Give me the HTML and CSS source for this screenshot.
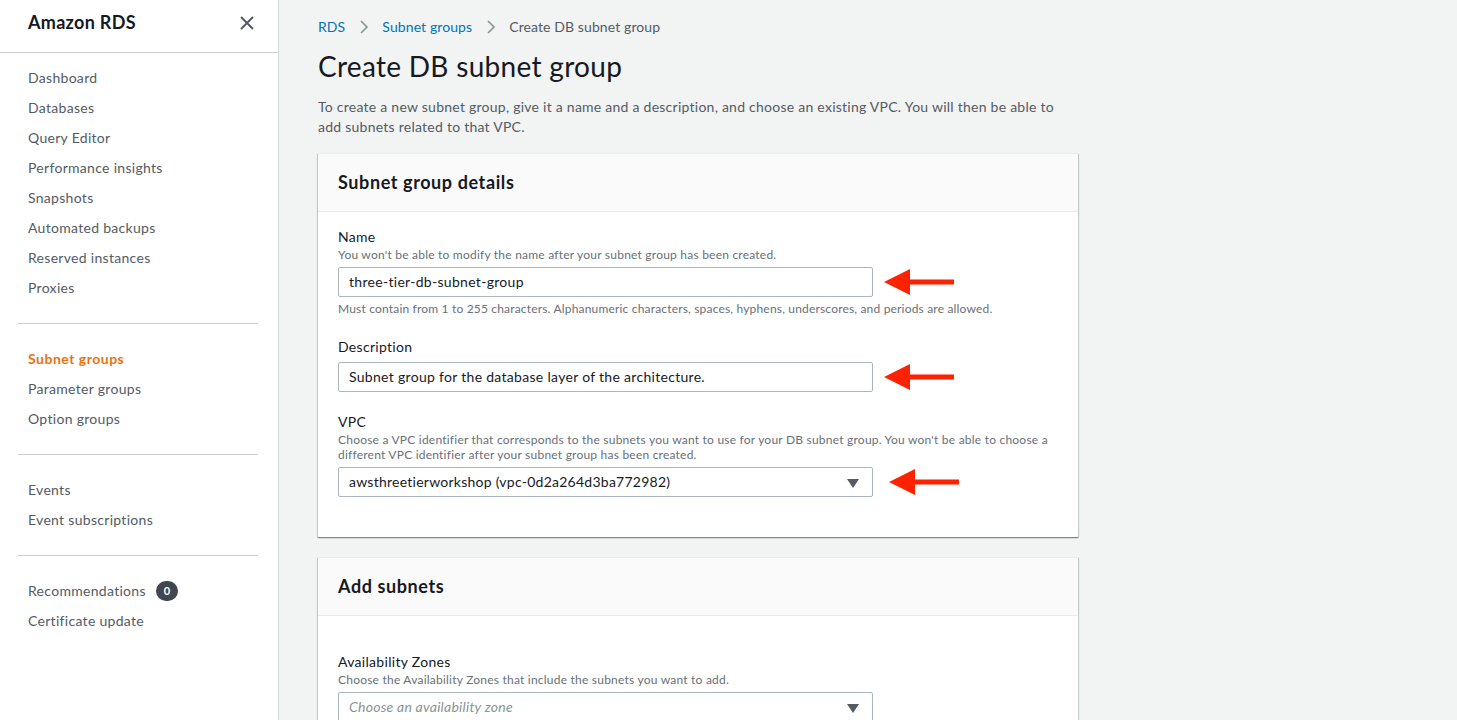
FILE: index.html
```html
<!DOCTYPE html>
<html lang="en">
<head>
<meta charset="utf-8">
<title>Create DB subnet group</title>
<link rel="stylesheet" href="styles.css">
</head>
<body>
<aside class="sidebar">
  <div class="side-head">
    <span class="side-title">Amazon RDS</span>
    <svg class="close" width="16" height="16" viewBox="0 0 16 16"><path d="M2 2 L14 14 M14 2 L2 14" stroke="#545b64" stroke-width="2" fill="none"/></svg>
  </div>
  <ul class="nav">
    <li>Dashboard</li>
    <li>Databases</li>
    <li>Query Editor</li>
    <li>Performance insights</li>
    <li>Snapshots</li>
    <li>Automated backups</li>
    <li>Reserved instances</li>
    <li>Proxies</li>
  </ul>
  <hr class="divider">
  <ul class="nav">
    <li class="active">Subnet groups</li>
    <li>Parameter groups</li>
    <li>Option groups</li>
  </ul>
  <hr class="divider">
  <ul class="nav">
    <li>Events</li>
    <li>Event subscriptions</li>
  </ul>
  <hr class="divider">
  <ul class="nav">
    <li>Recommendations <span class="badge">0</span></li>
    <li>Certificate update</li>
  </ul>
</aside>
<main class="main">
  <nav class="crumbs">
    <a class="crumb-link">RDS</a>
    <svg class="chev" width="10" height="14" viewBox="0 0 10 14"><path d="M2 1 L8 7 L2 13" stroke="#879596" stroke-width="1.6" fill="none"/></svg>
    <a class="crumb-link">Subnet groups</a>
    <svg class="chev" width="10" height="14" viewBox="0 0 10 14"><path d="M2 1 L8 7 L2 13" stroke="#879596" stroke-width="1.6" fill="none"/></svg>
    <span class="crumb-cur">Create DB subnet group</span>
  </nav>
  <h1 class="title">Create DB subnet group</h1>
  <p class="intro">To create a new subnet group, give it a name and a description, and choose an existing VPC. You will then be able to add subnets related to that VPC.</p>

  <section class="card">
    <div class="card-head"><h2>Subnet group details</h2></div>
    <div class="card-body">
      <div class="field">
        <div class="label">Name</div>
        <div class="hint">You won't be able to modify the name after your subnet group has been created.</div>
        <div class="row">
          <div class="input">three-tier-db-subnet-group</div>
          <svg class="arrow" width="72" height="28" viewBox="0 0 72 28"><path d="M0 14 L26 1 L26 11.5 L70 11.5 L70 16.5 L26 16.5 L26 27 Z" fill="#ff2200"/></svg>
        </div>
        <div class="constraint">Must contain from 1 to 255 characters. Alphanumeric characters, spaces, hyphens, underscores, and periods are allowed.</div>
      </div>
      <div class="field">
        <div class="label lbl-gap">Description</div>
        <div class="row">
          <div class="input">Subnet group for the database layer of the architecture.</div>
          <svg class="arrow" width="72" height="28" viewBox="0 0 72 28"><path d="M0 14 L26 1 L26 11.5 L70 11.5 L70 16.5 L26 16.5 L26 27 Z" fill="#ff2200"/></svg>
        </div>
      </div>
      <div class="field">
        <div class="label">VPC</div>
        <div class="hint hint-2">Choose a VPC identifier that corresponds to the subnets you want to use for your DB subnet group. You won't be able to choose a different VPC identifier after your subnet group has been created.</div>
        <div class="row">
          <div class="input select">awsthreetierworkshop (vpc-0d2a264d3ba772982)<span class="caret"></span></div>
          <svg class="arrow arrow-3" width="72" height="28" viewBox="0 0 72 28"><path d="M0 14 L26 1 L26 11.5 L70 11.5 L70 16.5 L26 16.5 L26 27 Z" fill="#ff2200"/></svg>
        </div>
      </div>
    </div>
  </section>

  <section class="card">
    <div class="card-head"><h2>Add subnets</h2></div>
    <div class="card-body body-2">
      <div class="field">
        <div class="label">Availability Zones</div>
        <div class="hint">Choose the Availability Zones that include the subnets you want to add.</div>
        <div class="row">
          <div class="input select placeholder">Choose an availability zone<span class="caret"></span></div>
        </div>
      </div>
    </div>
  </section>
</main>
</body>
</html>
```
FILE: styles.css
```css
* { box-sizing: border-box; }
html, body { margin: 0; padding: 0; }
body {
  display: flex;
  height: 720px;
  background: #f2f3f3;
  font-family: "Lato", "Open Sans", Arial, sans-serif;
  color: #16191f;
  font-size: 14px;
  line-height: 20px;
  letter-spacing: 0.3px;
  overflow: hidden;
}
.sidebar {
  width: 279px;
  flex: none;
  background: #ffffff;
  border-right: 1px solid #d5dbdb;
  height: 720px;
}
.side-head {
  height: 53px;
  border-bottom: 1px solid #cccccc;
  display: flex;
  align-items: center;
  justify-content: space-between;
  padding: 0 23px 0 28px;
}
.side-title {
  font-size: 18px;
  font-weight: 700;
  color: #16191f;
  margin-top: -8px;
}
.close { margin-top: -7px; }
.nav {
  list-style: none;
  margin: 0;
  padding: 0;
}
.nav:first-of-type { padding-top: 10px; }
.nav li {
  padding: 5px 28px;
  color: #545b64;
  font-size: 14px;
  line-height: 20px;
  display: flex;
  align-items: center;
}
.nav li.active { color: #ec7211; font-weight: 700; letter-spacing: 0.5px; }
.divider {
  border: 0;
  border-top: 1px solid #cccccc;
  margin: 20px 20px 20px 18px;
}
.badge {
  display: inline-flex;
  align-items: center;
  justify-content: center;
  width: 22px;
  height: 20px;
  border-radius: 10px;
  background: #414750;
  color: #fff;
  font-size: 11px;
  font-weight: 700;
  letter-spacing: 0;
  margin-left: 10px;
}
.main {
  flex: 1;
  padding: 17px 40px 0 39px;
}
.crumbs {
  display: flex;
  align-items: center;
  height: 20px;
  font-size: 14px;
  letter-spacing: 0.1px;
}
.crumb-link { color: #0073bb; }
.chev { margin: 0 13px 0 14px; }
.crumb-cur { color: #545b64; }
.title {
  margin: 11px 0 0;
  font-size: 28px;
  line-height: 36px;
  font-weight: 400;
  color: #16191f;
}
.intro {
  margin: 13px 0 0;
  width: 760px;
  color: #545b64;
  font-size: 14px;
  line-height: 20px;
  letter-spacing: 0.25px;
}
.card {
  width: 760px;
  margin-top: 16px;
  background: #fff;
  border-top: 1px solid #eaeded;
  box-shadow: 0 1px 1px 0 rgba(0,28,36,.3), 1px 1px 1px 0 rgba(0,28,36,.15), -1px 1px 1px 0 rgba(0,28,36,.15);
}
.card + .card { margin-top: 20px; }
.card-head {
  background: #fafafa;
  border-bottom: 1px solid #eaeded;
  padding: 18px 20px 19px;
}
.card-head h2 {
  margin: 0;
  font-size: 18px;
  line-height: 20px;
  font-weight: 700;
  letter-spacing: 0.6px;
  color: #16191f;
}
.card-body {
  padding: 15px 20px 40px;
}
.body-2 { padding-top: 36px; }
.label {
  font-size: 14px;
  line-height: 20px;
  color: #16191f;
}
.field + .field { margin-top: 20px; }
.hint {
  font-size: 12px;
  line-height: 16px;
  letter-spacing: 0.22px;
  color: #687078;
}
.hint-2 { line-height: 15px; }
.row {
  display: flex;
  align-items: center;
  gap: 11px;
  margin-top: 4px;
}
.lbl-gap + .row { margin-top: 5px; }
.hint-2 + .row { margin-top: 5px; }
.input {
  width: 535px;
  height: 30px;
  border: 1px solid #aab7b8;
  border-radius: 2px;
  padding: 0 10px;
  display: flex;
  align-items: center;
  font-size: 14px;
  color: #16191f;
  position: relative;
}
.select { padding-right: 30px; letter-spacing: 0.25px; }
.placeholder { color: #879596; font-style: italic; }
.caret {
  position: absolute;
  right: 13px;
  top: 11px;
  width: 0;
  height: 0;
  border-left: 6px solid transparent;
  border-right: 6px solid transparent;
  border-top: 9px solid #545b64;
}
.arrow-3 { margin-left: 5px; }
.constraint {
  margin-top: 4px;
  font-size: 12px;
  line-height: 16px;
  letter-spacing: 0.18px;
  color: #687078;
}
```
